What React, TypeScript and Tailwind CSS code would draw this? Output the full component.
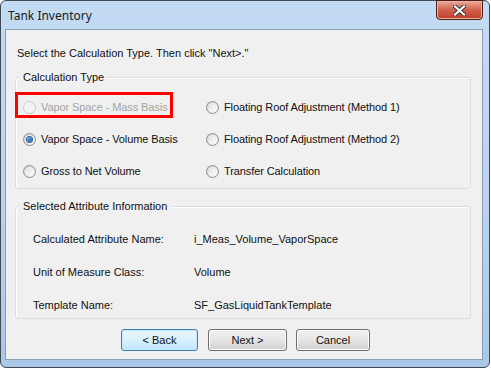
import React from "react";

const font = { fontFamily: '"Liberation Sans", Arial, sans-serif' };

function Radio({ checked, disabled }: { checked?: boolean; disabled?: boolean }) {
  return (
    <span
      className={
        "flex h-[13px] w-[13px] shrink-0 items-center justify-center rounded-full border " +
        (disabled
          ? "border-[#c9c9c9] bg-[#f4f4f4]"
          : "border-[#8e8f8f] bg-gradient-to-br from-[#cfcfcf] to-[#f6f6f6]")
      }
    >
      <span
        className={
          "flex h-[9px] w-[9px] items-center justify-center rounded-full " +
          (disabled ? "bg-[#f4f4f4]" : "bg-gradient-to-br from-[#e2e2e2] to-[#fbfbfb]")
        }
      >
        {checked && (
          <span className="h-[5px] w-[5px] rounded-full bg-gradient-to-br from-[#7bb7ee] to-[#0f4f97] shadow-[0_0_0_1px_#2a62a8]" />
        )}
      </span>
    </span>
  );
}

function Option({ label, checked, disabled }: { label: string; checked?: boolean; disabled?: boolean }) {
  return (
    <div className="flex h-[16px] items-center gap-[5px]">
      <Radio checked={checked} disabled={disabled} />
      <span className={"tracking-[-0.1px] " + (disabled ? "text-[#a3a3a3]" : "text-[#111]")}>{label}</span>
    </div>
  );
}

function Group({ title, children, className }: { title: string; children: React.ReactNode; className?: string }) {
  return (
    <div className={"relative rounded-[3px] border border-[#d5dfe5] shadow-[inset_1px_1px_0_#fff] " + (className ?? "")}>
      <span className="absolute -top-[8px] left-[4px] bg-[#f0f0f0] px-[3px] leading-[14px] text-[#111]">{title}</span>
      {children}
    </div>
  );
}

function Button({ label, focused }: { label: string; focused?: boolean }) {
  return (
    <button
      className={
        "flex h-[22px] w-full items-center justify-center rounded-[3px] border text-[#111] " +
        (focused
          ? "border-[#3c7fb1] bg-gradient-to-b from-[#eaf6fd] via-[#d9f0fc] to-[#bee6fd] shadow-[inset_0_0_0_1px_#c6e8fb]"
          : "border-[#707070] bg-gradient-to-b from-[#f2f2f2] via-[#e6e6e6] to-[#d0d0d0] shadow-[inset_0_0_0_1px_#fcfcfc]")
      }
    >
      {label}
    </button>
  );
}

export default function App() {
  return (
    <div className="h-[369px] w-[491px] bg-white text-[11px]" style={font}>
      <div className="flex h-[368px] w-[490px] flex-col rounded-[6px] border border-[#3f4a55] bg-gradient-to-b from-[#c3dbf3] via-[#bcd5ef] to-[#a9c8e8]">
        {/* title bar */}
        <div className="flex h-[28px] shrink-0 items-start">
          <span
            className="ml-[7px] mt-[7px] text-[12px] leading-[16px] text-[#1a1a1a]"
            style={{ fontFamily: '"Noto Sans", "Open Sans", sans-serif' }}
          >
            Tank Inventory
          </span>
          <div className="ml-auto mr-[6px] -mt-px flex h-[20px] w-[47px] items-center justify-center rounded-b-[4px] border border-[#4b1d14] bg-gradient-to-b from-[#e9a99b] via-[#d0614c] to-[#c13d28] shadow-[inset_0_0_0_1px_#eeb2a4]">
            <svg width="13" height="11" viewBox="0 0 13 11">
              <path d="M2 1.5 L11 9.5 M11 1.5 L2 9.5" stroke="#3a3a3a" strokeWidth="4.2" strokeLinecap="square" />
              <path d="M2 1.5 L11 9.5 M11 1.5 L2 9.5" stroke="#fff" strokeWidth="2.2" strokeLinecap="square" />
            </svg>
          </div>
        </div>

        {/* client area */}
        <div className="mb-[7px] ml-[4px] mr-[6px] flex flex-1 flex-col border border-[#8a9db2] bg-[#f0f0f0]">
          <div className="ml-[11px] mt-[17px] leading-[13px] text-[#111]">Select the Calculation Type. Then click "Next&gt;."</div>

          <Group title="Calculation Type" className="ml-[9px] mr-[11px] mt-[17px] h-[112px]">
            <div className="grid grid-cols-[183px_1fr] gap-y-[16px] pl-[7px] pt-[21px]">
              <Option label="Vapor Space - Mass Basis" disabled />
              <Option label="Floating Roof Adjustment (Method 1)" />
              <Option label="Vapor Space - Volume Basis" checked />
              <Option label="Floating Roof Adjustment (Method 2)" />
              <Option label="Gross to Net Volume" />
              <Option label="Transfer Calculation" />
            </div>
          </Group>

          <Group title="Selected Attribute Information" className="ml-[9px] mr-[11px] mt-[17px] h-[113px]">
            <div className="grid grid-cols-[161px_1fr] gap-y-[19px] pl-[17px] pt-[25px] leading-[14px] text-[#111]">
              <span>Calculated Attribute Name:</span>
              <span>i_Meas_Volume_VaporSpace</span>
              <span>Unit of Measure Class:</span>
              <span>Volume</span>
              <span>Template Name:</span>
              <span>SF_GasLiquidTankTemplate</span>
            </div>
          </Group>

          <div className="ml-[115px] mt-[10px] flex">
            <div className="w-[77px]"><Button label="< Back" focused /></div>
            <div className="ml-[10px] w-[79px]"><Button label="Next >" /></div>
            <div className="ml-[9px] w-[74px]"><Button label="Cancel" /></div>
          </div>
        </div>
      </div>

      {/* red annotation box over the disabled option */}
      <div className="pointer-events-none absolute left-[15px] top-[92px] h-[26px] w-[158px] border-[3px] border-[#ff0000]" />
    </div>
  );
}
